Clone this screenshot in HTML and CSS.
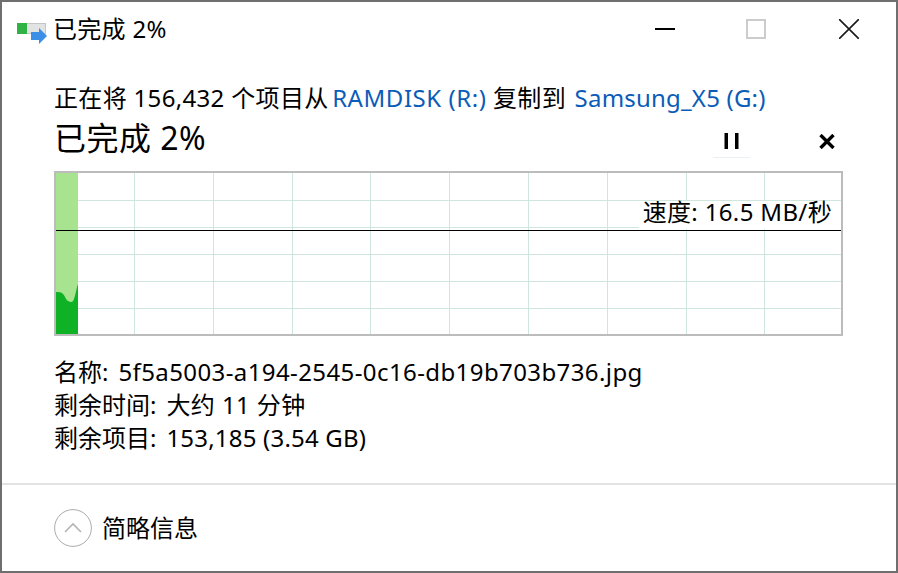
FILE: index.html
```html
<!DOCTYPE html>
<html lang="zh-CN">
<head>
    <meta charset="UTF-8">
    <title>已完成 2%</title>
    <link rel="stylesheet" href="styles.css">
</head>
<body>
    <div class="copy-window">
        <div class="title-bar">
            <svg class="app-icon" width="32" height="28" viewBox="0 0 32 28">
                <rect x="0.5" y="3.5" width="28" height="10" fill="#e2e4e4" stroke="#c4c6c6" stroke-width="1"/>
                <rect x="0" y="3" width="10" height="11" fill="#2fb344"/>
                <path d="M14 12h8V8l8 8-8 8v-4h-8z" fill="#3b8fe6"/>
            </svg>
            <span class="title-text">已完成 2%</span>
            <div class="window-buttons">
                <svg class="win-btn min-btn" width="20" height="20" viewBox="0 0 20 20"><path d="M0 10h20" stroke="#000" stroke-width="2"/></svg>
                <svg class="win-btn max-btn" width="20" height="20" viewBox="0 0 20 20"><rect x="1" y="1" width="18" height="18" fill="none" stroke="#cccccc" stroke-width="2"/></svg>
                <svg class="win-btn close-btn" width="20" height="20" viewBox="0 0 20 20"><path d="M0 0l20 20M20 0L0 20" stroke="#1a1a1a" stroke-width="1.6"/></svg>
            </div>
        </div>

        <div class="content">
            <div class="copy-line">正在将 156,432 个项目从 <a class="link link-source">RAMDISK (R:)</a> 复制到 <a class="link link-target">Samsung_X5 (G:)</a></div>

            <div class="status-row">
                <h1 class="status-text">已完成 2%</h1>
                <div class="status-buttons">
                    <div class="pause-btn">
                        <svg width="15" height="16" viewBox="0 0 15 16"><path d="M.5 0H4v16H.5zM11 0h3.500v16H11z" fill="#000"/></svg>
                    </div>
                    <svg class="stop-btn" width="16" height="15" viewBox="0 0 16 15"><path d="M1.5 1l13 13M14.5 1l-13 13" stroke="#000" stroke-width="3.4"/></svg>
                </div>
            </div>

            <div class="chart">
                <svg class="chart-svg" width="785" height="161" viewBox="0 0 785 161">
                    <path class="grid" d="M78.5 0v161M157.5 0v161M236.5 0v161M314.5 0v161M393.5 0v161M472.5 0v161M551.5 0v161M630.5 0v161M708.5 0v161"/>
                    <path class="grid" d="M0 27.5h785M0 54.5h785M0 81.5h785M0 108.5h785M0 135.5h785"/>
                    <rect x="0" y="0" width="22" height="161" fill="#a8e38f"/>
                    <path d="M0 161V119C3 119 5 119 7 121C9 123 10 127 12 128C14 129 16 129.500 17 128C19 125 20 117 22 111V161Z" fill="#0eb224"/>
                    <path d="M0 57.500h785" stroke="#000" stroke-width="1"/>
                </svg>
                <div class="speed">速度: 16.5 MB/秒</div>
            </div>

            <div class="details">
                <div class="detail-row"><span class="detail-label">名称:</span><span>5f5a5003-a194-2545-0c16-db19b703b736.jpg</span></div>
                <div class="detail-row"><span class="detail-label">剩余时间:</span><span>大约 11 分钟</span></div>
                <div class="detail-row"><span class="detail-label">剩余项目:</span><span class="detail-left">153,185 (3.54 GB)</span></div>
            </div>
        </div>

        <div class="footer">
            <div class="expand-btn">
                <svg width="38" height="38" viewBox="0 0 38 38">
                    <circle cx="19" cy="19" r="18.4" fill="#fff" stroke="#ababab" stroke-width="1"/>
                    <path d="M11 23l8-8 8 8" fill="none" stroke="#b4b4b4" stroke-width="1.6"/>
                </svg>
            </div>
            <span class="footer-text">简略信息</span>
        </div>
    </div>
</body>
</html>
```

FILE: styles.css
```css
body, html {
    margin: 0;
    padding: 0;
    height: 100%;
    background-color: #ffffff;
    font-family: "Noto Sans", "Noto Sans CJK SC", sans-serif;
    color: #000000;
}
.copy-window {
    box-sizing: border-box;
    width: 898px;
    height: 573px;
    border: 2px solid #6f6f6f;
    display: flex;
    flex-direction: column;
    overflow: hidden;
}
.title-bar {
    display: flex;
    align-items: center;
    height: 54px;
    padding-left: 15px;
}
.app-icon {
    align-self: flex-start;
    margin-top: 18px;
    margin-right: 4px;
}
.title-text {
    font-size: 24px;
    line-height: 54px;
    letter-spacing: 0.3px;
}
.window-buttons {
    margin-left: auto;
    display: flex;
    align-items: center;
    padding-right: 37px;
}
.max-btn {
    margin-left: 71px;
}
.close-btn {
    margin-left: 73px;
}
.content {
    padding: 22px 53px 0 52px;
    flex-grow: 1;
}
.copy-line {
    font-size: 24px;
    letter-spacing: 0.33px;
    line-height: 40px;
    white-space: nowrap;
}
.link {
    color: #0b5cb8;
}
.link-source {
    margin-left: -3px;
    letter-spacing: 0.55px;
}
.link-target {
    margin-left: 2px;
    letter-spacing: 0.2px;
}
.status-row {
    display: flex;
    align-items: center;
    height: 40px;
    margin-bottom: 13px;
}
.status-text {
    margin: 0;
    font-size: 32px;
    letter-spacing: 0.5px;
    font-weight: normal;
    line-height: 40px;
}
.status-buttons {
    margin-left: auto;
    align-self: stretch;
    display: flex;
    align-items: flex-end;
    padding-right: 8px;
}
.pause-btn {
    box-sizing: border-box;
    width: 37px;
    height: 37px;
    padding-top: 3px;
    display: flex;
    align-items: center;
    justify-content: center;
    border-bottom: 1px solid #eaf1f5;
    margin-right: 69px;
}
.stop-btn {
    margin-bottom: 9px;
}
.chart {
    position: relative;
    width: 785px;
    height: 161px;
    border: 2px solid #bcbcbc;
}
.chart-svg {
    display: block;
}
.grid {
    stroke: #cfe6dc;
    stroke-width: 1;
    fill: none;
}
.speed {
    position: absolute;
    right: 0;
    top: 28px;
    box-sizing: border-box;
    height: 28px;
    padding: 0 9px 0 4px;
    font-size: 24px;
    letter-spacing: 0.35px;
    line-height: 22px;
    background-color: #ffffff;
    white-space: nowrap;
}
.details {
    margin-top: 19px;
    font-size: 24px;
    letter-spacing: 0.4px;
    line-height: 33px;
    white-space: nowrap;
}
.detail-row {
    display: flex;
    gap: 10px;
}
.detail-label {
    letter-spacing: 0;
}
.detail-left {
    letter-spacing: 0.2px;
}
.footer {
    display: flex;
    align-items: center;
    height: 88px;
    border-top: 2px solid #e3e3e3;
    padding-left: 52px;
    padding-bottom: 1px;
    box-sizing: border-box;
}
.expand-btn {
    display: flex;
    margin-right: 10px;
}
.footer-text {
    font-size: 24px;
    line-height: 24px;
}
```
